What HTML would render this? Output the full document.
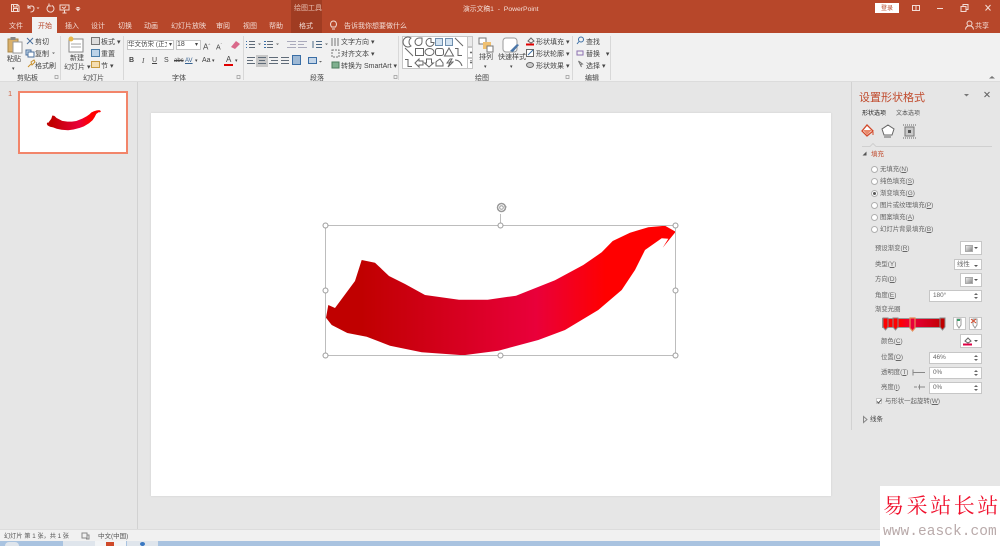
<!DOCTYPE html>
<html lang="zh">
<head>
<meta charset="utf-8">
<title>演示文稿1 - PowerPoint</title>
<style>
html,body{margin:0;padding:0;width:1000px;height:546px;overflow:hidden;background:#e6e6e6}
body{position:relative;font-family:"Liberation Sans","Noto Sans CJK SC",sans-serif;font-size:7px;color:#444}
#m{position:absolute;left:0;top:0;width:1000px;height:546px;filter:blur(.3px)}
.a{position:absolute}
.t{position:absolute;white-space:nowrap;line-height:10px;height:10px;margin-top:2px}
.w{color:#f3dcd5}
.s{width:1px;background:#d8d8d8;top:36px;height:44px;position:absolute}
.b{position:absolute;background:#fff;border:1px solid #c6c6c6;box-sizing:border-box}
.r{position:absolute;width:5px;height:5px;border:1px solid #b0b0b0;border-radius:50%;background:#fff;left:871px}
.p{color:#666;font-size:6.4px;margin-top:1px}
.b .p{margin-top:0}
svg{position:absolute;overflow:visible}
.sp:after{content:"";position:absolute;right:3px;top:2px;border:2px solid transparent;border-bottom:2px solid #666;border-top:0}
.sp:before{content:"";position:absolute;right:3px;bottom:2px;border:2px solid transparent;border-top:2px solid #666;border-bottom:0}
.dd:after{content:"";position:absolute;right:3px;top:5px;border:2px solid transparent;border-top:2px solid #555;border-bottom:0}
.sw{position:absolute;left:4px;top:3px;width:8px;height:7px;background:linear-gradient(135deg,#eee,#888);border:1px solid #aaa;box-sizing:border-box}
</style>
</head>
<body>
<div id="m">
<!-- title bar -->
<div class="a" style="left:0;top:0;width:1000px;height:33px;background:#b7472a"></div>
<div class="a" style="left:291px;top:0;width:31px;height:33px;background:#a03c22"></div>
<div class="a" style="left:32px;top:17px;width:25px;height:16px;background:#f1f1f1"></div>
<svg style="left:0;top:0" width="100" height="16" fill="none" stroke="#f3dcd5" stroke-width="1">
<path d="M11.5 4.5h6l1.5 1.5v5.5h-7.5zM13.5 4.5v2.500h3.500v-2.500M13.5 11.5v-3h4v3"/>
<path d="M28 5v3h3M28 8c2-3 6-2.5 6 .5s-2 3.5-3.5 3.5"/>
<path d="M36.5 7.5h3l-1.500 1.500z" fill="#f3dcd5" stroke="none"/>
<path d="M52 5.5a3.5 3.5 0 1 1-3 0M49 3.5v2.5h2.5"/>
<path d="M60 5h9v5h-9zM64.5 10v3M62.5 13h4M62 7l2 1.5 2-2"/>
<path d="M76.5 9h3l-1.5 1.500zM76.5 7.5h3" fill="#f3dcd5"/>
</svg>
<div class="t w" style="left:294px;top:2px;color:#e8bfb2">绘图工具</div>
<div class="t w" style="left:463px;top:3px;font-size:6.8px">演示文稿1 &nbsp;-&nbsp; PowerPoint</div>
<div class="a" style="left:875px;top:3px;width:24px;height:10px;background:#fff"></div>
<div class="t" style="left:881px;top:2px;color:#b7472a;font-size:6px">登录</div>
<svg style="left:910px;top:2px" width="90" height="12" fill="none" stroke="#f3dcd5" stroke-width="1">
<path d="M2.5 3.5h7v5h-7zM6 3.5v5"/>
<path d="M27 6.5h6"/>
<path d="M51 4.5h5v5h-5zM53 4.5v-2h5v5h-2"/>
<path d="M75.5 3l5 5.500M80.500 3l-5 5.500"/>
</svg>
<!-- tabs -->
<div class="t w" style="left:9px;top:20px">文件</div>
<div class="t" style="left:38px;top:20px;color:#b7472a">开始</div>
<div class="t w" style="left:65px;top:20px">插入</div>
<div class="t w" style="left:91px;top:20px">设计</div>
<div class="t w" style="left:118px;top:20px">切换</div>
<div class="t w" style="left:144px;top:20px">动画</div>
<div class="t w" style="left:171px;top:20px">幻灯片放映</div>
<div class="t w" style="left:216px;top:20px">审阅</div>
<div class="t w" style="left:243px;top:20px">视图</div>
<div class="t w" style="left:269px;top:20px">帮助</div>
<div class="t w" style="left:299px;top:20px">格式</div>
<svg style="left:329px;top:20px" width="10" height="11" fill="none" stroke="#f3dcd5"><path d="M2.5 7c-2-3-.5-6 2-6s4 3 2 6zM3 9h3"/></svg>
<div class="t w" style="left:344px;top:20px">告诉我你想要做什么</div>
<svg style="left:965px;top:20px" width="9" height="11" fill="none" stroke="#f3dcd5"><circle cx="4.5" cy="3.5" r="2.5"/><path d="M.5 9.500c0-5 8-5 8 0"/></svg>
<div class="t w" style="left:975px;top:20px">共享</div>

<!-- ribbon -->
<div class="a" style="left:0;top:33px;width:1000px;height:48px;background:#f1f1f1;border-bottom:1px solid #dcdcdc"></div>
<div class="s" style="left:60px"></div><div class="s" style="left:123px"></div><div class="s" style="left:243px"></div>
<div class="s" style="left:398px"></div><div class="s" style="left:572px"></div><div class="s" style="left:610px"></div>
<svg style="left:0;top:74px" width="600" height="6" fill="none" stroke="#999" stroke-width=".7"><path d="M55 1.500h3v3h-3zM237 1.500h3v3h-3zM394 1.500h3v3h-3zM566 1.500h3v3h-3z"/></svg>

<!-- clipboard -->
<svg style="left:7px;top:37px" width="17" height="18"><rect x="1" y="2" width="10" height="13" fill="#d9b06a" stroke="#a98648"/><rect x="3.500" y="0" width="5" height="3" fill="#888"/><rect x="6" y="5" width="9" height="11" fill="#fff" stroke="#999"/></svg>
<div class="t" style="left:7px;top:53px">粘贴</div>
<div class="t" style="left:12px;top:62px;font-size:5px">▾</div>
<div class="t" style="left:35px;top:36px">剪切</div>
<div class="t" style="left:35px;top:48px">复制</div>
<div class="t" style="left:35px;top:60px">格式刷</div>
<svg style="left:26px;top:37px" width="40" height="36" fill="none" stroke="#4a6f9c">
<path d="M1 1l6 6M7 1l-6 6"/><rect x="0" y="13" width="5" height="5" fill="#cfe0ef"/><rect x="2" y="15" width="6" height="5" fill="#fff"/>
<path d="M2 30l3-3M5 25l3-2 1 2-3 3z" stroke="#c9902c"/>
<path d="M26 15.500h3l-1.500 1.500z" fill="#666" stroke="none"/>
</svg>
<div class="t" style="left:17px;top:72px">剪贴板</div>

<!-- slides -->
<svg style="left:67px;top:36px" width="18" height="18"><rect x="2" y="3" width="14" height="13" fill="#fff" stroke="#888"/><path d="M4 8h10M4 11h10" stroke="#aaa"/><circle cx="4" cy="3" r="2.5" fill="#e6b84d"/></svg>
<div class="t" style="left:70px;top:52px">新建</div>
<div class="t" style="left:64px;top:61px">幻灯片 ▾</div>
<svg style="left:91px;top:37px" width="10" height="32" fill="none" stroke="#777"><rect x=".5" y=".5" width="8" height="7" fill="#ddd"/><rect x=".5" y="12.5" width="8" height="7" fill="#bcd3e8" stroke="#4a7da8"/><rect x=".5" y="24.5" width="8" height="6" fill="#f5deb0" stroke="#c79b40"/></svg>
<div class="t" style="left:101px;top:36px">板式 ▾</div>
<div class="t" style="left:101px;top:48px">重置</div>
<div class="t" style="left:101px;top:60px">节 ▾</div>
<div class="t" style="left:83px;top:72px">幻灯片</div>

<!-- font -->
<div class="b" style="left:127px;top:40px;width:47px;height:10px"></div>
<div class="t" style="left:128px;top:38px;font-size:6.5px;width:39px;overflow:hidden">华文仿宋 (正文</div>
<div class="t" style="left:169px;top:38px;font-size:6px">▾</div>
<div class="b" style="left:176px;top:40px;width:25px;height:10px"></div>
<div class="t" style="left:177px;top:38px">18</div>
<div class="t" style="left:195px;top:38px;font-size:6px">▾</div>
<div class="t" style="left:203px;top:38px;font-size:8px">A<sup style="font-size:4px">^</sup></div>
<div class="t" style="left:216px;top:38px;font-size:7px">A<sup style="font-size:4px">ˇ</sup></div>
<svg style="left:230px;top:40px" width="11" height="10"><path d="M1 7l5-6 4 3-5 5z" fill="#d9698a"/></svg>
<div class="t" style="left:129px;top:54px;font-weight:bold">B</div>
<div class="t" style="left:142px;top:54px;font-style:italic;font-family:'Liberation Serif',serif">I</div>
<div class="t" style="left:152px;top:54px;text-decoration:underline">U</div>
<div class="t" style="left:164px;top:54px">S</div>
<div class="t" style="left:174px;top:54px;font-size:6px;text-decoration:line-through">abc</div>
<div class="t" style="left:185px;top:54px;font-size:6px;text-decoration:underline;color:#35608f">AV</div>
<div class="t" style="left:195px;top:54px;font-size:5px">▾</div>
<div class="t" style="left:202px;top:54px">Aa</div>
<div class="t" style="left:212px;top:54px;font-size:5px">▾</div>
<div class="t" style="left:226px;top:53px;font-size:8px">A</div>
<div class="a" style="left:224px;top:64px;width:9px;height:2px;background:#e00000"></div>
<div class="t" style="left:235px;top:54px;font-size:5px">▾</div>
<div class="t" style="left:172px;top:72px">字体</div>

<!-- paragraph -->
<svg style="left:246px;top:40px" width="150" height="27" fill="none" stroke="#5f6b78">
<path d="M3 1.500h6M3 4.500h6M3 7.500h6" /><path d="M0 1.500h1M0 4.500h1M0 7.500h1" stroke="#3a6ea5"/>
<path d="M21 1.500h6M21 4.500h6M21 7.500h6"/><path d="M18 1.500h2M18 4.500h2M18 7.500h2" stroke="#3a6ea5"/>
<path d="M41 1.500h9M44 4.500h6M41 7.500h9M52 1.500h9M52 4.500h6M52 7.500h9" stroke="#aab"/>
<path d="M70 1.500h6M70 4.500h6M70 7.500h6M67 1v7" stroke="#4d6a86"/>
<path d="M12 3.500h3l-1.500 1.500zM30 3.500h3l-1.500 1.500zM79 3.500h3l-1.500 1.500zM73 21h3l-1.500 1.500z" fill="#666" stroke="none"/>
<path d="M1 17.500h8M1 20.500h6M1 23.500h8"/>
<rect x="10" y="15" width="12" height="12" fill="#c8c8c8" stroke="none"/>
<path d="M12 17.500h8M13 20.500h6M12 23.500h8"/>
<path d="M23 17.500h9M25 20.500h7M23 23.500h9M35 17.500h8M35 20.500h8M35 23.500h8"/>
<rect x="46.500" y="15.500" width="8" height="9" fill="#9db8d4" stroke="#3a6ea5"/>
<rect x="62.500" y="17.500" width="8" height="6" fill="#c3d5e8" stroke="#3a6ea5"/>
</svg>
<div class="t" style="left:310px;top:72px">段落</div>
<svg style="left:331px;top:37px" width="10" height="32" fill="none" stroke="#777"><path d="M1 1v8M4 1v8M7 1v8"/><path d="M1 13h7v7H1z" stroke-dasharray="2 1"/><rect x="1" y="25" width="7" height="6" fill="#7fb08f" stroke="#4c7d5c"/></svg>
<div class="t" style="left:341px;top:36px">文字方向 ▾</div>
<div class="t" style="left:341px;top:48px">对齐文本 ▾</div>
<div class="t" style="left:341px;top:60px">转换为 SmartArt ▾</div>

<!-- drawing gallery -->
<div class="b" style="left:402px;top:36px;width:71px;height:33px"></div>
<div class="b" style="left:467px;top:36px;width:6px;height:11px;background:#eaeaea"></div>
<div class="b" style="left:467px;top:47px;width:6px;height:11px"></div>
<div class="b" style="left:467px;top:58px;width:6px;height:11px"></div>
<svg style="left:402px;top:36px" width="72" height="33" fill="none" stroke="#666">
<path d="M9 2a5 5 0 1 0 0 8 5 5 0 0 1 0-8z"/>
<path d="M13 6a4 4 0 0 1 4-4h3v4a3.500 3.500 0 0 1-7 0z"/>
<path d="M29 2.500a4 4 0 1 0 3 4h-3z"/>
<rect x="33.500" y="2.500" width="7" height="7" fill="#d3e3f1" stroke="#6f8fae"/>
<rect x="43.500" y="2.500" width="7" height="7" fill="#d3e3f1" stroke="#6f8fae"/>
<path d="M53 2l8 8"/>
<path d="M3 12l8 8"/>
<rect x="13.500" y="12.500" width="8" height="7"/>
<ellipse cx="27.500" cy="16" rx="4.500" ry="3.500"/>
<rect x="33.500" y="12.500" width="8" height="7" rx="2"/>
<path d="M47 12l-4.500 8h9z"/>
<path d="M53 12.500h3v7h4"/>
<path d="M3 23.500h3v7h4"/>
<path d="M13 27l4-4v2h4v4h-4v2z"/>
<path d="M24.500 23h5v4h2l-4.500 4-4.500-4h2z"/>
<path d="M34 30h7v-3l-3-4-3 2-1 1z"/>
<path d="M48 23l-3 4h3l-2 4 5-5h-3l2-3z"/>
<path d="M53 24c3 0 6 2 7 6"/>
<path d="M68 16h2l-1 1.500zM68 26h2l-1 1.500zM68 24.500h2" fill="#555" stroke="#555" stroke-width=".5"/>
</svg>
<div class="t" style="left:475px;top:72px">绘图</div>
<svg style="left:478px;top:37px" width="20" height="17"><rect x="1" y="1" width="7" height="6" fill="#fff" stroke="#777"/><rect x="5" y="5" width="8" height="7" fill="#f0c070"/><rect x="9" y="9" width="6" height="6" fill="#fff" stroke="#777"/></svg>
<div class="t" style="left:479px;top:51px">排列</div>
<div class="t" style="left:484px;top:60px;font-size:5px">▾</div>
<svg style="left:502px;top:37px" width="20" height="17"><rect x="1" y="1" width="14" height="14" rx="3" fill="#fff" stroke="#999"/><path d="M8 14l7-7 2 1-6 7z" fill="#4b76a8"/></svg>
<div class="t" style="left:498px;top:51px">快速样式</div>
<div class="t" style="left:510px;top:60px;font-size:5px">▾</div>
<svg style="left:526px;top:36px" width="10" height="34" fill="none" stroke="#666"><path d="M2 5l3-3 3 3-3 2z"/><rect x="0" y="7.500" width="8" height="2" fill="#e00000" stroke="none"/><rect x=".5" y="13.500" width="7" height="7" fill="#fff"/><path d="M2 19l5-5" stroke="#3a6ea5"/><ellipse cx="4" cy="29" rx="3.500" ry="2.500" fill="#ccc"/></svg>
<div class="t" style="left:536px;top:36px">形状填充 ▾</div>
<div class="t" style="left:536px;top:48px">形状轮廓 ▾</div>
<div class="t" style="left:536px;top:60px">形状效果 ▾</div>

<!-- edit -->
<svg style="left:576px;top:36px" width="9" height="33" fill="none" stroke="#3a6ea5"><circle cx="5" cy="3.500" r="2.500"/><path d="M3 5.500L1 8"/><path d="M1 15h6v4H1z" stroke="#8a6fb0"/><path d="M2.500 25l4 3-2 .5 1 2.500z" stroke="#777"/></svg>
<div class="t" style="left:586px;top:36px">查找</div>
<div class="t" style="left:586px;top:48px">替换 &nbsp;&nbsp;▾</div>
<div class="t" style="left:586px;top:60px">选择 ▾</div>
<div class="t" style="left:585px;top:72px">编辑</div>
<svg style="left:988px;top:75px" width="8" height="4"><path d="M1 3.500L4 1l3 2.500z" fill="#777"/></svg>

<!-- left pane -->
<div class="a" style="left:137px;top:82px;width:1px;height:448px;background:#d2d2d2"></div>
<div class="t" style="left:8px;top:87px;color:#d0603f;font-size:7.5px">1</div>
<div class="a" style="left:18px;top:91px;width:110px;height:63px;box-sizing:border-box;background:#fff;border:2px solid #f2856a"></div>
<svg style="left:0;top:0" width="140" height="150">
<defs><linearGradient id="g2" gradientUnits="userSpaceOnUse" x1="0" x2="1049" y1="0" y2="0"><stop offset="0" stop-color="#c00000"/><stop offset=".1" stop-color="#c00000"/><stop offset=".6" stop-color="#e9003a"/><stop offset=".8" stop-color="#ff0000"/></linearGradient></defs>
<path transform="translate(46.8 110.3) scale(.0517)" fill="url(#g2)" d="M0 266L7 235 27 244 87 163 107 100 147 108 189 148 237 172 297 205 399 219 485 219 570 207 687 161 772 115 827 77 860 43 912 18 967 2 1017 -3 1049 15 1010 63 1027 36 1007 35 957 70 927 130 887 190 817 250 717 310 637 340 517 372 412 386 287 377 192 357 122 330 64 319 17 295z"/>
</svg>

<!-- slide -->
<div class="a" style="left:151px;top:113px;width:680px;height:383px;background:#fff;box-shadow:0 0 2px #cfcfcf"></div>
<svg style="left:0;top:0" width="1000" height="546">
<defs><linearGradient id="g1" gradientUnits="userSpaceOnUse" x1="326" x2="676" y1="0" y2="0"><stop offset="0" stop-color="#c00000"/><stop offset=".1" stop-color="#c00000"/><stop offset=".6" stop-color="#e9003a"/><stop offset=".8" stop-color="#ff0000"/><stop offset="1" stop-color="#ff0000"/></linearGradient></defs>
<path fill="url(#g1)" d="M326 317.700L328.300 305 335 308 355 281 361.700 260 375 262.700 389 276 405 284 425 295 459 299.700 487.700 299.700 516 295.700 555 280.300 583.300 265 601.700 252.300 612.700 241 630 232.700 648.300 227.300 665 225.700 675.700 231.700 662.700 247.700 668.300 238.700 661.700 238.300 645 250 635 270 621.700 290 598.300 310 565 330 538.300 340 498.300 350.700 463.300 355.300 421.700 352.300 390 345.700 366.700 336.700 347.300 333 331.700 325z"/>
<g fill="none" stroke="#bdbdbd" stroke-width="1">
<rect x="325.500" y="225.500" width="350" height="130"/>
<path d="M500.500 225v-11"/>
<circle cx="501.500" cy="207.500" r="4" stroke="#9a9a9a" stroke-width="1.500"/><circle cx="501.500" cy="207.500" r="1.800" stroke="#9a9a9a"/><path d="M504 206.500h3l-1.500 2z" fill="#9a9a9a" stroke="none"/>
</g>
<g fill="#fff" stroke="#9a9a9a" stroke-width="1">
<circle cx="325.500" cy="225.500" r="2.500"/><circle cx="500.500" cy="225.500" r="2.500"/><circle cx="675.500" cy="225.500" r="2.500"/>
<circle cx="325.500" cy="290.500" r="2.500"/><circle cx="675.500" cy="290.500" r="2.500"/>
<circle cx="325.500" cy="355.500" r="2.500"/><circle cx="500.500" cy="355.500" r="2.500"/><circle cx="675.500" cy="355.500" r="2.500"/>
</g>
</svg>

<!-- right panel -->
<div class="a" style="left:851px;top:82px;width:1px;height:348px;background:#d2d2d2"></div>
<div class="t" style="left:859px;top:91px;font-size:11px;line-height:11px;color:#c0492b">设置形状格式</div>
<svg style="left:960px;top:89px" width="32" height="12" fill="none" stroke="#666"><path d="M4 5h5l-2.500 2.500z" fill="#777" stroke="none"/><path d="M24.500 3l5 5M29.500 3l-5 5" stroke-width="1.100"/></svg>
<div class="t" style="left:862px;top:107px;font-size:6px;color:#222">形状选项</div>
<div class="t" style="left:896px;top:107px;font-size:6px;color:#555">文本选项</div>
<svg style="left:860px;top:123px" width="60" height="16" fill="none" stroke="#666">
<path d="M7 2l6 6-6 5-5-5z" fill="#fff" stroke="#d2492a" stroke-width="1.300"/><path d="M3 7l9 0-5 5z" fill="#e98a6c" stroke="none"/><path d="M13 9v3" stroke="#d2492a"/>
<path d="M28 2l6 4-2 6h-8l-2-6z" fill="#fff" stroke="#666"/><path d="M24 14h7"/>
<rect x="45" y="4" width="9" height="9" fill="#c9c9c9" stroke="#777"/><path d="M43 2h13M43 15h13" stroke-dasharray="1 1"/><rect x="48" y="7" width="3" height="3" fill="#555" stroke="none"/>
</svg>
<svg style="left:860px;top:142px" width="135" height="6" fill="none" stroke="#d0d0d0"><path d="M2 4.500h8l3-3 3 3h116"/></svg>
<svg style="left:862px;top:151px" width="6" height="6"><path d="M.5 4.500h4v-4z" fill="#555"/></svg>
<div class="t" style="left:871px;top:148px;color:#c0492b;font-size:6.5px">填充</div>
<div class="r" style="top:166px"></div><div class="t p" style="left:880px;top:164px">无填充(<u>N</u>)</div>
<div class="r" style="top:178px"></div><div class="t p" style="left:880px;top:176px">纯色填充(<u>S</u>)</div>
<div class="r" style="top:190px"></div><div class="a" style="left:873px;top:192px;width:3px;height:3px;border-radius:50%;background:#555"></div><div class="t p" style="left:880px;top:188px">渐变填充(<u>G</u>)</div>
<div class="r" style="top:202px"></div><div class="t p" style="left:880px;top:200px">图片或纹理填充(<u>P</u>)</div>
<div class="r" style="top:214px"></div><div class="t p" style="left:880px;top:212px">图案填充(<u>A</u>)</div>
<div class="r" style="top:226px"></div><div class="t p" style="left:880px;top:224px">幻灯片背景填充(<u>B</u>)</div>

<div class="t p" style="left:875px;top:243px">预设渐变(<u>R</u>)</div>
<div class="b dd" style="left:960px;top:241px;width:22px;height:14px"><div class="sw"></div></div>
<div class="t p" style="left:875px;top:259px">类型(<u>Y</u>)</div>
<div class="b dd" style="left:954px;top:259px;width:28px;height:11px"><div class="t p" style="left:2px;top:0">线性</div></div>
<div class="t p" style="left:875px;top:274px">方向(<u>D</u>)</div>
<div class="b dd" style="left:960px;top:273px;width:22px;height:14px"><div class="sw"></div></div>
<div class="t p" style="left:875px;top:290px">角度(<u>E</u>)</div>
<div class="b sp" style="left:929px;top:290px;width:53px;height:12px"><div class="t p" style="left:3px;top:0">180°</div></div>
<div class="t p" style="left:875px;top:304px">渐变光圈</div>

<div class="a" style="left:882px;top:318px;width:63px;height:10px;box-sizing:border-box;border:1px solid #999;background:linear-gradient(90deg,#ff0000 0%,#ff0000 28%,#e9003a 46%,#c00000 100%)"></div>
<svg style="left:880px;top:316px" width="68" height="17" fill="none">
<path d="M3 2h5v9l-2.500 3L3 11z" stroke="#888" fill="#ff0000"/>
<path d="M13 2h5v9l-2.500 3L13 11z" stroke="#888" fill="#ff0000"/>
<path d="M30 2h5v10l-2.500 3-2.500-3z" stroke="#e88a55" stroke-width="1.200" fill="#e9003a"/>
<path d="M60 2h5v9l-2.500 3-2.500-3z" stroke="#888" fill="#c00000"/>
</svg>
<div class="b" style="left:953px;top:317px;width:13px;height:13px"></div>
<div class="b" style="left:969px;top:317px;width:13px;height:13px"></div>
<svg style="left:953px;top:317px" width="30" height="13" fill="none"><path d="M4 2h4v6l-2 3-2-3z" stroke="#999" fill="#fff"/><path d="M4 3h3" stroke="#3c9d6a" stroke-width="2"/><path d="M20 2h4v6l-2 3-2-3z" stroke="#999" fill="#fff"/><path d="M18 2l5 4M23 2l-5 4" stroke="#d2492a"/></svg>
<div class="t p" style="left:881px;top:336px">颜色(<u>C</u>)</div>
<div class="b dd" style="left:960px;top:334px;width:22px;height:14px"></div>
<svg style="left:963px;top:336px" width="10" height="10"><path d="M2 5l3-3 3 3-3 2z" fill="#fff" stroke="#666"/><rect x="0" y="7.500" width="9" height="2" fill="#e00045"/></svg>
<div class="t p" style="left:881px;top:352px">位置(<u>O</u>)</div>
<div class="b sp" style="left:929px;top:352px;width:53px;height:12px"><div class="t p" style="left:3px;top:0">46%</div></div>
<div class="t p" style="left:881px;top:367px">透明度(<u>T</u>)</div>
<svg style="left:911px;top:368px" width="16" height="24" fill="none" stroke="#888"><path d="M2 1.500v6M2 4.500h12M7 19h7M8.500 16.500v5"/><path d="M3 19h3"/></svg>
<div class="b sp" style="left:929px;top:367px;width:53px;height:12px"><div class="t p" style="left:3px;top:0">0%</div></div>
<div class="t p" style="left:881px;top:382px">亮度(<u>I</u>)</div>
<div class="b sp" style="left:929px;top:382px;width:53px;height:12px"><div class="t p" style="left:3px;top:0">0%</div></div>
<div class="b" style="left:876px;top:398px;width:6px;height:6px"></div>
<svg style="left:876px;top:398px" width="7" height="7" fill="none" stroke="#555"><path d="M1 3.500l1.500 1.500L5.500 1.500"/></svg>
<div class="t p" style="left:885px;top:396px">与形状一起旋转(<u>W</u>)</div>
<svg style="left:863px;top:416px" width="5" height="7"><path d="M.5 .5l3.500 3-3.500 3z" fill="none" stroke="#888"/></svg>
<div class="t" style="left:870px;top:413px;font-size:6.5px">线条</div>

<!-- status bar -->
<div class="a" style="left:0;top:529px;width:1000px;height:12px;background:#f1f1f1;border-top:1px solid #dcdcdc;box-sizing:border-box"></div>
<div class="t" style="left:4px;top:530px;color:#555;font-size:6.2px">幻灯片 第 1 张，共 1 张</div>
<svg style="left:81px;top:532px" width="9" height="8" fill="none" stroke="#888"><path d="M1 1h5v5H1zM6 3h2v4H5"/></svg>
<div class="t" style="left:98px;top:530px;color:#555;font-size:6.5px">中文(中国)</div>
<!-- taskbar -->
<div class="a" style="left:0;top:541px;width:1000px;height:5px;background:#a9c3e0"></div>
<div class="a" style="left:63px;top:541px;width:32px;height:5px;background:#dfe5ec"></div>
<div class="a" style="left:95px;top:541px;width:31px;height:5px;background:#f2f4f6"></div>
<div class="a" style="left:106px;top:542px;width:8px;height:4px;background:#cf4a2a"></div>
<div class="a" style="left:127px;top:541px;width:31px;height:5px;background:#dfe5ec"></div>
<div class="a" style="left:140px;top:542px;width:5px;height:4px;background:#3a78c2;border-radius:50%"></div>
<div class="a" style="left:5px;top:542px;width:14px;height:4px;background:#dfe5ec;border-radius:7px 7px 0 0"></div>
</div>

<!-- watermark -->
<div class="a" style="left:880px;top:486px;width:120px;height:60px;background:#fff"></div>
<div class="t" style="left:883px;top:492px;margin-top:0;height:26px;line-height:26px;font-size:21px;letter-spacing:2.6px;color:#f0102c;font-family:'Noto Serif CJK SC','Liberation Serif',serif">易采站长站</div>
<div class="t" style="left:883px;top:524px;margin-top:0;height:16px;line-height:16px;font-size:14.5px;letter-spacing:.05px;color:#b9aaaa;font-family:'Liberation Mono',monospace">www.easck.com</div>
</body>
</html>
